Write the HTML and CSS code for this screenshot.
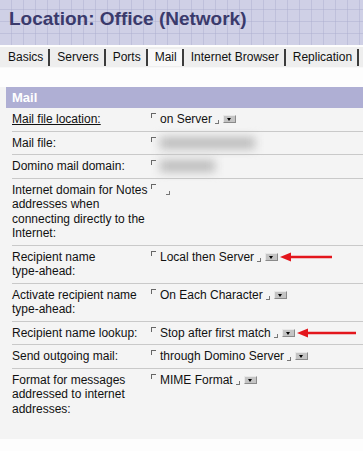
FILE: index.html
```html
<!DOCTYPE html>
<html lang="en">
<head>
    <meta charset="UTF-8">
    <meta name="viewport" content="width=device-width, initial-scale=1.0">
    <title>Location: Office (Network)</title>
    <link rel="stylesheet" href="styles.css">
</head>
<body>
    <div class="header">
        <h1>Location: Office (Network)</h1>
    </div>

    <div class="tabs">
        <span class="tab">Basics</span>
        <span class="tab">Servers</span>
        <span class="tab">Ports</span>
        <span class="tab active">Mail</span>
        <span class="tab">Internet Browser</span>
        <span class="tab">Replication</span>
    </div>

    <div class="section">
        <div class="section-title">Mail</div>

        <div class="row">
            <div class="label"><u>Mail file location:</u></div>
            <div class="value">
                <span class="mark-start"></span>on Server<span class="mark-end"></span><span class="drop"></span>
            </div>
        </div>

        <div class="row">
            <div class="label">Mail file:</div>
            <div class="value">
                <span class="mark-start"></span><span class="blur blur-wide"></span>
            </div>
        </div>

        <div class="row">
            <div class="label">Domino mail domain:</div>
            <div class="value">
                <span class="mark-start"></span><span class="blur blur-short"></span>
            </div>
        </div>

        <div class="row">
            <div class="label">Internet domain for Notes addresses when connecting directly to the Internet:</div>
            <div class="value">
                <span class="mark-start"></span><span class="gap"></span><span class="mark-end"></span>
            </div>
        </div>

        <div class="row">
            <div class="label">Recipient name <span class="nowrap">type-ahead:</span></div>
            <div class="value">
                <span class="mark-start"></span>Local then Server<span class="mark-end"></span><span class="drop"></span><svg class="arrow" width="52" height="10" viewBox="0 0 52 10"><path d="M10 5 H52" stroke="#e3161c" stroke-width="2.5"/><path d="M0 5 L11 0.5 L11 9.5 Z" fill="#e3161c"/></svg>
            </div>
        </div>

        <div class="row">
            <div class="label">Activate recipient name <span class="nowrap">type-ahead:</span></div>
            <div class="value">
                <span class="mark-start"></span>On Each Character<span class="mark-end"></span><span class="drop"></span>
            </div>
        </div>

        <div class="row">
            <div class="label">Recipient name lookup:</div>
            <div class="value">
                <span class="mark-start"></span>Stop after first match<span class="mark-end"></span><span class="drop"></span><svg class="arrow" width="59" height="10" viewBox="0 0 59 10"><path d="M10 5 H59" stroke="#e3161c" stroke-width="2.5"/><path d="M0 5 L11 0.5 L11 9.5 Z" fill="#e3161c"/></svg>
            </div>
        </div>

        <div class="row">
            <div class="label">Send outgoing mail:</div>
            <div class="value">
                <span class="mark-start"></span>through Domino Server<span class="mark-end"></span><span class="drop"></span>
            </div>
        </div>

        <div class="row last">
            <div class="label">Format for messages addressed to internet addresses:</div>
            <div class="value">
                <span class="mark-start"></span>MIME Format<span class="mark-end"></span><span class="drop"></span>
            </div>
        </div>
    </div>
</body>
</html>
```

FILE: styles.css
```css
* {
    margin: 0;
    padding: 0;
    box-sizing: border-box;
}

body {
    background: #fdfdfd;
    font-family: 'Liberation Sans', Arial, sans-serif;
    font-size: 12px;
    color: #111;
}

.header {
    height: 45px;
    background-color: #cfd0e6;
    background-image:
        repeating-linear-gradient(90deg, transparent 0, transparent 11px, rgba(170, 172, 205, 0.45) 11px, rgba(170, 172, 205, 0.45) 12px),
        repeating-linear-gradient(0deg, transparent 0, transparent 11px, rgba(170, 172, 205, 0.45) 11px, rgba(170, 172, 205, 0.45) 12px);
    padding: 8px 0 0 9px;
}

.header h1 {
    font-size: 19px;
    font-weight: bold;
    color: #3a3a6c;
    line-height: 22px;
}

.tabs {
    display: flex;
    margin-top: 2px;
    height: 21px;
    background: #eeeeee;
    border-bottom: 1px solid #f8f8f8;
    padding-left: 1px;
    align-items: center;
    white-space: nowrap;
    overflow: hidden;
}

.tab {
    flex-shrink: 0;
    padding: 0 5px 0 7px;
    line-height: 17px;
    border-right: 2px solid #3c3c3c;
}

.tab.active {
    background: #f8f8f8;
}

.section {
    margin-top: 19px;
    background: #f4f4f4;
    padding-bottom: 19px;
}

.section-title {
    margin-left: 6px;
    height: 21px;
    line-height: 21px;
    background: #afafd4;
    color: #fff;
    font-weight: bold;
    font-size: 13px;
    padding-left: 6px;
}

.row {
    display: grid;
    grid-template-columns: 138px 1fr;
    margin-left: 12px;
    border-bottom: 1px solid #c9c9c9;
    padding: 4px 0 4px;
    line-height: 14.5px;
}

.row.last {
    border-bottom: none;
}

.nowrap {
    white-space: nowrap;
}

.value {
    padding-left: 1px;
    white-space: nowrap;
}

.mark-start {
    display: inline-block;
    width: 5px;
    height: 5px;
    border-left: 1px solid #666;
    border-top: 1px solid #666;
    vertical-align: top;
    margin: 1px 4px 0 0;
}

.mark-end {
    display: inline-block;
    width: 4px;
    height: 4px;
    border-right: 1px solid #777;
    border-bottom: 1px solid #777;
    margin: 0 4px 0 3px;
    vertical-align: -1px;
}

.drop {
    display: inline-block;
    width: 13px;
    height: 8px;
    background: #c4c4c4;
    border: 1px solid;
    border-color: #e8e8e8 #8a8a8a #8a8a8a #e8e8e8;
    vertical-align: 0;
    position: relative;
}

.drop::after {
    content: '';
    position: absolute;
    left: 3px;
    top: 2px;
    border-left: 2.5px solid transparent;
    border-right: 2.5px solid transparent;
    border-top: 3px solid #000;
}

.arrow {
    margin-left: 2px;
    vertical-align: -1px;
}

.gap {
    display: inline-block;
    width: 3px;
}

.blur {
    display: inline-block;
    height: 12px;
    background: #bcbcbc;
    filter: blur(5px);
    vertical-align: -2px;
}

.blur-wide {
    width: 95px;
}

.blur-short {
    width: 55px;
}
```
